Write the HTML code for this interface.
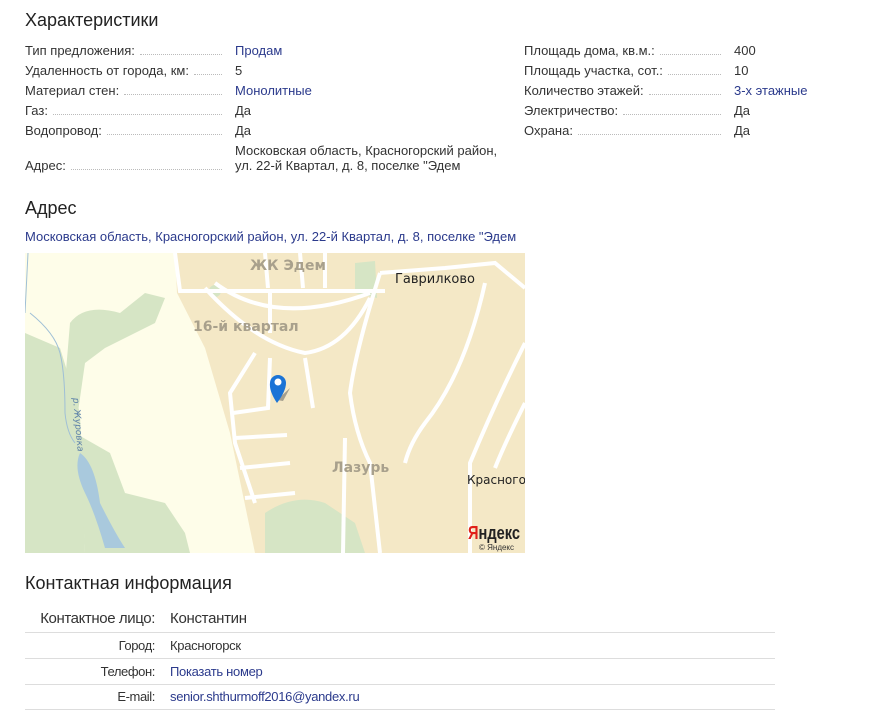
<!DOCTYPE html>
<html><head><meta charset="utf-8"><style>
*{margin:0;padding:0;box-sizing:border-box}
body{width:888px;height:726px;background:#fff;font-family:"Liberation Sans",Arial,sans-serif;color:#333;font-size:13px;position:relative;overflow:hidden}
.a{position:absolute;white-space:nowrap}
h2{position:absolute;font-weight:normal;font-size:18px;color:#222;white-space:nowrap}
.row{position:absolute;height:16px;display:flex;align-items:flex-end}
.lab{display:flex;align-items:flex-end;width:200px}
.lab span{white-space:nowrap}
.lab i{flex:1;border-bottom:1px dotted #bbb;margin:0 3px 3px 5px}
.val{margin-left:10px;white-space:nowrap}
.lnk{color:#2b3a8c}
.ct{position:absolute;left:25px;width:750px;border-bottom:1px solid #ddd;height:26px}
.ct .l{position:absolute;right:620px;top:5px;white-space:nowrap;letter-spacing:-0.4px}
.ct .v{position:absolute;left:145px;top:5px;white-space:nowrap;letter-spacing:-0.3px}
</style></head><body>
<h2 style="left:25px;top:10px">Характеристики</h2>

<div class="row" style="left:25px;top:42px"><div class="lab"><span>Тип предложения:</span><i></i></div><span class="val lnk">Продам</span></div>
<div class="row" style="left:25px;top:62px"><div class="lab"><span>Удаленность от города, км:</span><i></i></div><span class="val">5</span></div>
<div class="row" style="left:25px;top:82px"><div class="lab"><span>Материал стен:</span><i></i></div><span class="val lnk">Монолитные</span></div>
<div class="row" style="left:25px;top:102px"><div class="lab"><span>Газ:</span><i></i></div><span class="val">Да</span></div>
<div class="row" style="left:25px;top:122px"><div class="lab"><span>Водопровод:</span><i></i></div><span class="val">Да</span></div>
<div class="row" style="left:25px;top:157px"><div class="lab"><span>Адрес:</span><i></i></div></div>
<div class="a" style="left:235px;top:143px;line-height:15px">Московская область, Красногорский район,<br>ул. 22-й Квартал, д. 8, поселке "Эдем</div>

<div class="row" style="left:524px;top:42px"><div class="lab"><span>Площадь дома, кв.м.:</span><i></i></div><span class="val">400</span></div>
<div class="row" style="left:524px;top:62px"><div class="lab"><span>Площадь участка, сот.:</span><i></i></div><span class="val">10</span></div>
<div class="row" style="left:524px;top:82px"><div class="lab"><span>Количество этажей:</span><i></i></div><span class="val lnk">3-х этажные</span></div>
<div class="row" style="left:524px;top:102px"><div class="lab"><span>Электричество:</span><i></i></div><span class="val">Да</span></div>
<div class="row" style="left:524px;top:122px"><div class="lab"><span>Охрана:</span><i></i></div><span class="val">Да</span></div>

<h2 style="left:25px;top:198px">Адрес</h2>
<div class="a lnk" style="left:25px;top:229px">Московская область, Красногорский район, ул. 22-й Квартал, д. 8, поселке "Эдем</div>

<svg class="a" style="left:25px;top:253px" width="500" height="300" viewBox="0 0 500 300">
<rect width="500" height="300" fill="#fefde9"/>
<path d="M150 0 L500 0 L500 300 L230 300 L205 180 L180 95 L152 40 Z" fill="#f4e8c6"/>
<path d="M0 80 L35 95 L55 160 L60 300 L0 300 Z" fill="#d6e5c5"/>
<path d="M45 70 Q60 50 95 60 L120 40 L140 45 L130 70 L100 85 L80 95 L60 110 L50 180 L85 200 L100 240 L140 250 L160 280 L165 300 L60 300 L55 200 L40 130 Z" fill="#d6e5c5"/>
<path d="M240 260 Q270 240 300 250 L330 270 L340 300 L240 300 Z" fill="#d6e5c5"/>
<path d="M330 10 L350 8 L352 45 L330 40 Z" fill="#d6e5c5"/>
<circle cx="190" cy="38" r="6" fill="#d6e5c5"/>
<path d="M55 200 Q70 210 75 250 Q90 280 100 295 L80 295 Q70 260 60 240 Q48 215 55 200Z" fill="#a9c9dd"/>
<path d="M3 0 L0 60 M5 60 Q30 80 35 100 Q40 120 40 160 Q42 180 50 190" stroke="#9fbfd6" stroke-width="1" fill="none"/>
<g stroke="#fff" stroke-width="4" fill="none">
<path d="M150 0 L155 38 L360 38"/>
<path d="M180 35 Q230 90 280 100 Q320 95 345 45"/>
<path d="M190 30 Q250 75 345 40"/>
<path d="M230 100 L205 140 L210 190 L230 250"/>
<path d="M245 105 L243 155 L208 160"/>
<path d="M280 105 L288 155"/>
<path d="M210 185 L262 182 M215 215 L265 210 M220 245 L270 240"/>
<path d="M355 20 Q330 100 325 140 Q330 180 345 210 L355 300"/>
<path d="M320 185 L318 300"/>
<path d="M355 20 L420 15 L470 10 L500 35"/>
<path d="M460 30 Q440 120 400 170 Q385 190 380 210"/>
<path d="M500 90 Q470 150 445 210 L445 300"/>
<path d="M500 150 Q480 190 470 215"/>
<path d="M240 0 L243 35 M275 0 L278 35 M300 0 L300 35 M245 40 L245 80"/>
</g>
<g font-family="'DejaVu Sans',sans-serif" font-weight="bold" font-size="14" fill="#a8a08c">
<text x="225" y="17">ЖК Эдем</text>
<text x="168" y="78">16-й квартал</text>
<text x="307" y="219">Лазурь</text>
</g>
<text x="370" y="30" font-family="'DejaVu Sans',sans-serif" font-size="13" fill="#222">Гаврилково</text>
<text x="442" y="231" font-family="'DejaVu Sans',sans-serif" font-size="12" fill="#222">Красного</text>
<text x="48" y="145" font-family="'DejaVu Sans',sans-serif" font-size="9" fill="#5a7fa8" font-style="italic" transform="rotate(85 48 145)">р. Журовка</text>
<path d="M252 147 L265 135 L258 148Z" fill="#555" opacity=".5"/>
<path d="M252 150 Q244 138 245 130 A8 8 0 1 1 261 130 Q261 138 252 150Z" fill="#1a73d6"/>
<circle cx="253" cy="129" r="3.5" fill="#fff"/>
<text x="443" y="286" font-family="'Liberation Sans',sans-serif" font-size="18" font-weight="bold" fill="#222" textLength="52" lengthAdjust="spacingAndGlyphs"><tspan fill="#e0201a">Я</tspan>ндекс</text>
<text x="454" y="297" font-family="'Liberation Sans',sans-serif" font-size="8" fill="#333">© Яндекс</text>
</svg>

<h2 style="left:25px;top:573px">Контактная информация</h2>
<div class="ct" style="top:607px"><span class="l" style="font-size:15px;top:3px">Контактное лицо:</span><span class="v" style="font-size:15px;top:3px">Константин</span></div>
<div class="ct" style="top:633px"><span class="l">Город:</span><span class="v">Красногорск</span></div>
<div class="ct" style="top:659px"><span class="l">Телефон:</span><span class="v lnk">Показать номер</span></div>
<div class="ct" style="top:684px"><span class="l">E-mail:</span><span class="v lnk">senior.shthurmoff2016@yandex.ru</span></div>
</body></html>
